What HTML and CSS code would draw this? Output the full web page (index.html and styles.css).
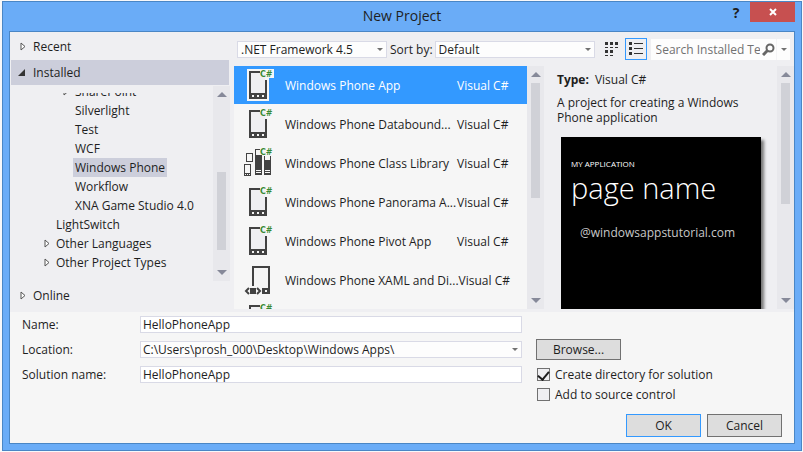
FILE: index.html
```html
<!DOCTYPE html>
<html lang="en">
<head>
<meta charset="utf-8">
<title>New Project</title>
<link rel="stylesheet" href="styles.css">
</head>
<body>
<svg class="defs" aria-hidden="true">
  <symbol id="phone" viewBox="0 0 30 34">
    <path class="halo" d="M2 1H29V10H24V33H2Z"/>
    <path class="screen" d="M6 5H20V25H6Z"/>
    <path class="ink" fill-rule="evenodd" d="M4 3H15V5H6V25H20V12H22V31H4ZM7 27V29H9V27ZM12 27V29H14V27ZM17 27V29H19V27Z"/>
    <text class="lang" x="15" y="9">C#</text>
  </symbol>
  <symbol id="library" viewBox="0 0 30 34">
    <path class="ink" fill-rule="evenodd" d="M1 7H8V16H1ZM2 8V15H7V8ZM-1 18H6V30H-1ZM0 19V27H5V19ZM0 28V29H1V28ZM2 28V29H3V28ZM4 28V29H5V28ZM10 3H15V4H11V9H17V29H10ZM11 24V25H16V24ZM11 26V27H16V26ZM19 10H20V14H25V10H26V29H19ZM20 24V25H25V24ZM20 26V27H25V26Z"/>
    <text class="lang" x="15" y="9">C#</text>
  </symbol>
  <symbol id="xaml" viewBox="0 0 30 34">
    <path class="ink" fill-rule="evenodd" d="M7 3H25V31H17V25H23V5H9V23H7ZM20 27V29H22V27ZM5 25H11V31H5Z"/>
    <path class="stroke" d="M4 25L1 28L4 31M12 25L15 28L12 31"/>
  </symbol>
  <symbol id="closed" viewBox="0 0 6 9"><path d="M1 1V8L5 4.5Z" fill="#fff" stroke="#555"/></symbol>
  <symbol id="open" viewBox="0 0 7 7"><path d="M7 0V7H0Z" fill="#333"/></symbol>
</svg>

<main class="dialog">
  <header class="titlebar">
    <h1>New Project</h1>
    <button class="help" aria-label="Help">?</button>
    <button class="close" aria-label="Close"><svg viewBox="0 0 8 8"><path d="M1 1L7 7M7 1L1 7" stroke="#fff" stroke-width="2"/></svg></button>
  </header>

  <div class="content">
    <div class="browser">
      <nav class="sidebar">
        <a class="group" href="#"><svg class="arrow"><use href="#closed"/></svg>Recent</a>
        <a class="group current" href="#"><svg class="arrow open"><use href="#open"/></svg>Installed</a>
        <div class="tree">
          <ul>
            <li class="deep"><a href="#"><svg class="arrow"><use href="#closed"/></svg>SharePoint</a></li>
            <li class="deep"><a href="#">Silverlight</a></li>
            <li class="deep"><a href="#">Test</a></li>
            <li class="deep"><a href="#">WCF</a></li>
            <li class="deep"><a class="selected" href="#">Windows Phone</a></li>
            <li class="deep"><a href="#">Workflow</a></li>
            <li class="deep"><a href="#">XNA Game Studio 4.0</a></li>
            <li><a href="#">LightSwitch</a></li>
            <li><a href="#"><svg class="arrow"><use href="#closed"/></svg>Other Languages</a></li>
            <li><a href="#"><svg class="arrow"><use href="#closed"/></svg>Other Project Types</a></li>
          </ul>
          <div class="scrollbar low"><i class="up"></i><div class="track"><i class="thumb"></i></div><i class="down"></i></div>
        </div>
        <a class="group" href="#"><svg class="arrow"><use href="#closed"/></svg>Online</a>
      </nav>

      <section class="workspace">
        <div class="toolbar">
          <div class="combo framework"><select aria-label="Framework"><option>.NET Framework 4.5</option></select></div>
          <label for="sort">Sort by:</label>
          <div class="combo sort"><select id="sort"><option>Default</option></select></div>
          <button class="view" aria-label="Small icons"><svg viewBox="0 0 14 14"><path fill="#333" d="M0 0H3V3H0ZM5 0H8V3H5ZM10 0H13V3H10ZM0 5H3V6H0ZM5 5H8V6H5ZM10 5H13V6H10ZM0 8H3V11H0ZM5 8H8V11H5ZM0 13H3V14H0ZM5 13H8V14H5Z"/></svg></button>
          <button class="view active" aria-label="Medium icons"><svg viewBox="0 0 14 14"><path fill="#333" d="M0 0H3V3H0ZM0 5H3V8H0ZM0 10H3V13H0ZM5 1H14V2H5ZM5 6H14V7H5ZM5 11H14V12H5Z"/></svg></button>
          <div class="search">
            <input type="text" aria-label="Search installed templates" placeholder="Search Installed Te">
            <svg viewBox="0 0 13 13"><circle cx="8" cy="5" r="3.5" fill="none" stroke="#666" stroke-width="2"/><path d="M5.5 7.5L1 12" stroke="#666" stroke-width="3"/></svg>
            <i class="caret"></i>
          </div>
        </div>

        <div class="panes">
          <div class="templates">
            <ul>
              <li class="selected"><svg><use href="#phone"/></svg><span class="name">Windows Phone App</span><span>Visual C#</span></li>
              <li><svg><use href="#phone"/></svg><span class="name">Windows Phone Databound...</span><span>Visual C#</span></li>
              <li><svg><use href="#library"/></svg><span class="name">Windows Phone Class Library</span><span>Visual C#</span></li>
              <li><svg><use href="#phone"/></svg><span class="name">Windows Phone Panorama A...</span><span>Visual C#</span></li>
              <li><svg><use href="#phone"/></svg><span class="name">Windows Phone Pivot App</span><span>Visual C#</span></li>
              <li><svg><use href="#xaml"/></svg><span class="name">Windows Phone XAML and Di...</span><span>Visual C#</span></li>
              <li><svg><use href="#phone"/></svg></li>
            </ul>
            <div class="scrollbar"><i class="up"></i><div class="track"><i class="thumb"></i></div><i class="down"></i></div>
          </div>
          <div class="details">
            <div class="info">
              <p class="type"><b>Type:</b><span>Visual C#</span></p>
              <p>A project for creating a Windows Phone application</p>
              <div class="preview">
                <div class="app">MY APPLICATION</div>
                <div class="page">page name</div>
                <div class="credit">@windowsappstutorial.com</div>
              </div>
            </div>
            <div class="scrollbar"><i class="up"></i><div class="track"><i class="thumb"></i></div><i class="down"></i></div>
          </div>
        </div>
      </section>
    </div>

    <form class="settings">
      <div class="fields">
        <label for="name">Name:</label>
        <input type="text" id="name" value="HelloPhoneApp">
        <label for="location">Location:</label>
        <div class="combo"><select id="location"><option>C:\Users\prosh_000\Desktop\Windows Apps\</option></select></div>
        <label for="solution">Solution name:</label>
        <input type="text" id="solution" value="HelloPhoneApp">
      </div>
      <div class="options">
        <button type="button" class="button browse">Browse...</button>
        <label><input type="checkbox" checked>Create directory for solution</label>
        <label><input type="checkbox">Add to source control</label>
      </div>
      <div class="actions">
        <button type="button" class="button primary">OK</button>
        <button type="button" class="button">Cancel</button>
      </div>
    </form>
  </div>
</main>
</body>
</html>
```
FILE: styles.css
```css
* { box-sizing: border-box; }

body {
  margin: 0;
  padding: 1px 1px 1px 2px;
  height: 100vh;
  background: #f8f8fa;
  color: #1e1e1e;
  font: 12px/15px "Open Sans", "Noto Sans", sans-serif;
}

ul, p, h1 { margin: 0; padding: 0; list-style: none; }
a { color: inherit; text-decoration: none; }
button, input, select { font: inherit; color: inherit; margin: 0; }
svg { display: block; flex: none; }
symbol { overflow: visible; }
.defs { position: absolute; width: 0; height: 0; }

.dialog {
  display: flex;
  flex-direction: column;
  height: 100%;
  padding: 0 6px 6px;
  background: #6aacf7;
  border: 1px solid #4a86c5;
}

/* Title bar */
.titlebar {
  display: grid;
  grid-template-columns: 1fr auto 1fr;
  align-items: start;
  height: 29px;
  flex: none;
  position: relative;
}
.titlebar h1 { grid-column: 2; font-size: 14px; line-height: 28px; font-weight: 400; }
.titlebar button { border: 0; padding: 0; height: 20px; }
.help {
  position: absolute;
  right: 47px;
  width: 24px;
  background: none;
  font-weight: 700;
  font-size: 14px;
}
.close {
  position: absolute;
  right: 0;
  width: 45px;
  background: #c75050;
}
.close svg { width: 8px; height: 8px; margin: auto; }

.content {
  flex: 1;
  min-height: 0;
  display: flex;
  flex-direction: column;
  border: 1px solid #4a86c5;
  background: #f6f6f6;
}
.browser {
  flex: 1;
  min-height: 0;
  display: flex;
  gap: 4px;
  background: #efeff2;
  padding-bottom: 3px;
}

/* Category tree */
.sidebar { flex: none; width: 220px; display: flex; flex-direction: column; }
.group {
  display: flex;
  align-items: center;
  height: 28px;
  flex: none;
  margin: 0 1px;
  padding-left: 22px;
  position: relative;
}
.group.current { height: 25px; background: #cccedb; }
.arrow { position: absolute; width: 6px; height: 9px; }
.group .arrow { left: 9px; }
.group .arrow.open { left: 7px; width: 7px; height: 7px; }
.tree { flex: 1; min-height: 0; display: flex; margin-top: 1px; }
.tree ul {
  flex: 1;
  min-width: 0;
  margin-top: 7px;
  overflow: hidden;
  display: flex;
  flex-direction: column;
  justify-content: flex-end;
  padding: 0 0 9px 44px;
}
.tree li { height: 19px; flex: none; display: flex; }
.tree li.deep { padding-left: 19px; }
.tree li a { position: relative; padding: 2px; white-space: nowrap; }
.tree li a .arrow { left: -10px; top: 5px; }
.tree a.selected { background: #cccedb; }

/* Scroll bars */
.scrollbar {
  flex: none;
  width: 17px;
  display: flex;
  flex-direction: column;
  align-items: center;
  background: #e8e8ec;
}
.scrollbar .up, .scrollbar .down { height: 17px; display: flex; align-items: center; }
.up::before, .down::before {
  content: "";
  border: 5px solid transparent;
  border-top-width: 0;
  border-bottom-color: #868999;
}
.down::before { border-width: 5px 5px 0; border-color: #868999 transparent; }
.track { flex: 1; display: flex; flex-direction: column; }
.thumb { width: 9px; height: 55%; background: #d0d1d7; }
.details .thumb { height: 58%; }
.low .track { justify-content: flex-end; padding-bottom: 14px; }
.low .thumb { height: 78px; }

/* Toolbar */
.workspace { flex: 1; min-width: 0; display: flex; flex-direction: column; }
.toolbar {
  flex: none;
  height: 34px;
  display: flex;
  align-items: center;
  padding: 0 4px 0 3px;
}
.combo { position: relative; height: 17px; min-width: 0; }
.combo select {
  appearance: none;
  display: block;
  width: 100%;
  height: 17px;
  padding: 0 16px 0 3px;
  line-height: 15px;
  border: 1px solid #d9dae6;
  border-radius: 0;
  background: #fdfdfd;
}
.combo::after, .caret::after {
  content: "";
  border: 3px solid transparent;
  border-top-color: #717171;
  border-bottom-width: 0;
}
.combo::after { position: absolute; right: 4px; top: 7px; pointer-events: none; }
.framework { flex: 0 1 150px; }
.toolbar label { margin: 0 2px 0 3px; white-space: nowrap; }
.sort { flex: 0 1 160px; }
.view {
  flex: none;
  width: 22px;
  height: 22px;
  margin-left: 6px;
  padding: 3px;
  border: 1px solid transparent;
  background: none;
}
.view.active { margin: 0 4px 0 2px; border-color: #3399ff; }
.view svg { width: 14px; height: 14px; }
.search {
  flex: 1;
  min-width: 0;
  display: flex;
  align-items: center;
  height: 21px;
  background: #fdfdfd;
}
.search input { flex: 1; min-width: 0; border: 0; padding: 0 0 0 5px; background: none; }
.search input::placeholder { color: #717171; opacity: 1; }
.search svg { width: 13px; height: 13px; margin: 0 1px 0 2px; }
.caret { display: flex; align-items: center; justify-content: center; width: 14px; height: 21px; border-left: 1px solid #f4f4f6; }

/* Template list */
.panes { flex: 1; min-height: 0; display: flex; }
.templates { flex: 310 1 0; min-width: 0; display: flex; }
.templates ul { flex: 1; min-width: 0; overflow: hidden; background: #f6f6f6; }
.templates li {
  display: flex;
  align-items: center;
  height: 38px;
  margin-bottom: 1px;
  padding-left: 11px;
  white-space: nowrap;
}
.templates li.selected { background: #3399ff; color: #fff; --halo: #f6f6f6; }
.templates li svg { width: 30px; height: 34px; margin-right: 10px; overflow: visible; }
.name { min-width: 172px; }
.ink { fill: #424242; }
.stroke { fill: none; stroke: #424242; stroke-width: 2; }
.screen { fill: #efeff2; }
.halo { fill: var(--halo, none); }
.lang { fill: #388a34; font: bold 8px "DejaVu Sans", sans-serif; }

/* Template details */
.details { flex: 250 1 0; min-width: 0; display: flex; justify-content: space-between; }
.info { flex: 1; min-width: 0; padding: 6px 14px 0 13px; overflow: hidden; }
.type { display: flex; gap: 6px; margin-bottom: 8px; }
.preview {
  width: 200px;
  height: 320px;
  margin: 12px 0 0 4px;
  padding: 19px 10px;
  background: #000;
  color: #fff;
  box-shadow: 3px 3px 3px #777;
}
.app { font-size: 8px; }
.page { font-size: 29px; line-height: 34px; font-weight: 300; }
.credit { margin: 20px 0 0 9px; color: #c8c8c8; }

/* Project settings */
.settings {
  flex: none;
  display: grid;
  grid-template-columns: 512px 1fr;
  padding: 4px 12px 6px;
}
.fields {
  display: grid;
  grid-template-columns: 118px 382px;
  grid-auto-rows: 17px;
  row-gap: 8px;
  align-items: center;
}
.fields > input {
  width: 100%;
  height: 17px;
  padding: 0 2px;
  border: 1px solid #d9dae6;
  background: #fff;
}
.fields .combo select { padding-left: 2px; }
.options { padding: 23px 0 0 2px; }
.options label { display: flex; align-items: center; gap: 5px; height: 20px; padding-left: 1px; }
.options input {
  appearance: none;
  display: grid;
  place-items: center;
  width: 13px;
  height: 13px;
  border: 1px solid #717171;
  background: #efeff2;
}
.options input:checked::before {
  content: "";
  width: 5px;
  height: 9px;
  margin-bottom: 2px;
  border: solid #1e1e1e;
  border-width: 0 2px 2px 0;
  transform: rotate(40deg);
}
.button {
  width: 75px;
  height: 23px;
  padding: 0;
  border: 1px solid #717171;
  background: #dddddd;
}
.browse { display: block; width: 85px; height: 21px; margin-bottom: 4px; }
.primary { border-color: #3399ff; }
.actions {
  grid-column: 1 / -1;
  display: flex;
  justify-content: flex-end;
  gap: 6px;
  margin-top: 10px;
}
```
